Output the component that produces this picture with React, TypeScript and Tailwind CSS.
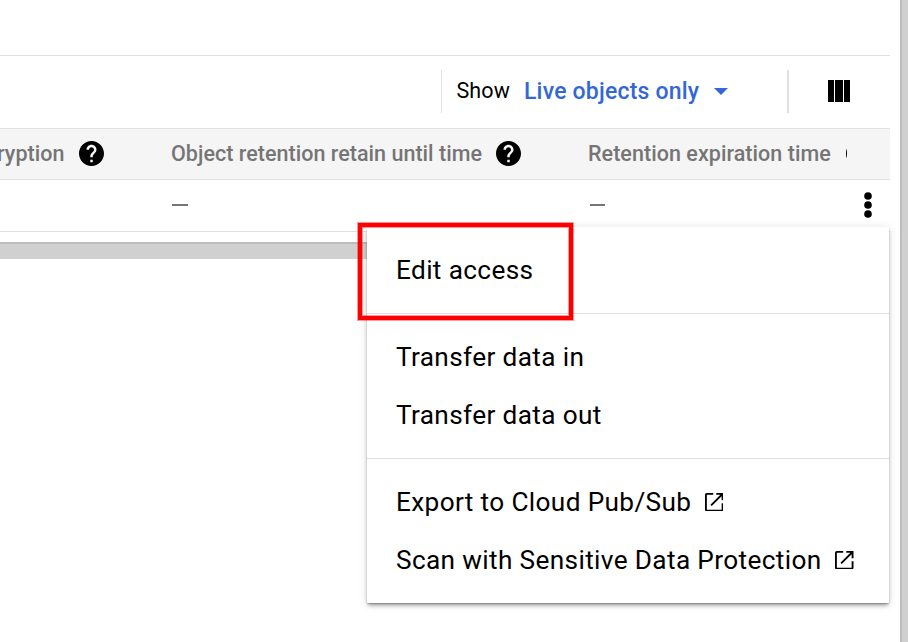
import React from "react";

function HelpIcon() {
  return (
    <svg viewBox="2 2 20 20" className="h-[25px] w-[25px] shrink-0 fill-black">
      <path d="M12 2C6.48 2 2 6.48 2 12s4.48 10 10 10 10-4.48 10-10S17.52 2 12 2zm1 17h-2v-2h2v2zm2.07-7.75l-.9.92C13.45 12.9 13 13.5 13 15h-2v-.5c0-1.1.45-2.1 1.17-2.83l1.24-1.26c.37-.36.59-.86.59-1.41 0-1.1-.9-2-2-2s-2 .9-2 2H8c0-2.21 1.79-4 4-4s4 1.79 4 4c0 .88-.36 1.68-.93 2.25z" />
    </svg>
  );
}

function OpenInNewIcon() {
  return (
    <svg viewBox="3 3 18 18" className="h-[18.5px] w-[18.5px] shrink-0 fill-black">
      <path d="M21 19.3c0 .95-.75 1.7-1.7 1.7H4.7C3.75 21 3 20.25 3 19.3V4.7C3 3.75 3.75 3 4.7 3H11v1.8H4.8v14.4h14.4V13H21zM14 3v1.8h3.93l-9.63 9.63 1.27 1.27L19.2 6.07V10H21V3z" />
    </svg>
  );
}

function MenuItem({ label, external }: { label: string; external?: boolean }) {
  return (
    <div className="flex h-[58px] items-center gap-[13.5px] whitespace-nowrap pl-[29px] text-[26.2px] tracking-[0.36px] text-black">
      <span className="pt-[2px]">{label}</span>
      {external && <OpenInNewIcon />}
    </div>
  );
}

export default function App() {
  return (
    <div className="relative flex h-[642px] w-[908px] overflow-hidden bg-white font-[Roboto,sans-serif]">
      <main className="w-[900px] shrink-0">
        <div className="w-[890px]">
          <div className="h-[55px]" />
          <div className="flex h-[73px] items-center border-t border-[#e0e0e0] pb-[2px]">
            <div className="ml-[441px] h-[43px] w-px bg-[#e0e0e0]" />
            <span className="ml-[14.5px] w-[67.5px] text-[21.5px] tracking-[0.1px] text-black">Show</span>
            <span className="w-[190px] whitespace-nowrap pt-[2px] text-[23px] font-medium tracking-[0.2px] text-[#3367d6]">
              Live objects only
            </span>
            <svg viewBox="0 0 14 7" className="h-[7px] w-[14px] fill-[#3367d6]">
              <path d="M0 0h14L7 7z" />
            </svg>
            <div className="ml-[59px] h-[43px] w-[2px] bg-[#e0e0e0]" />
            <svg viewBox="0 0 22 22" className="ml-[39px] h-[22px] w-[22px] fill-black">
              <path d="M0 0h6v22H0zM7 0h8v22H7zM16 0h6v22h-6z" />
            </svg>
          </div>
          <div className="flex h-[52px] items-center overflow-hidden whitespace-nowrap border-y border-[#e0e0e0] bg-[#f5f5f5] pb-px text-[21.5px] font-medium tracking-[0.05px] text-[#757575]">
            <div className="flex w-[171px] items-center gap-[14px]">
              <div className="flex w-[65px] justify-start">
                <span className="-ml-[3px] pt-[2px]">ryption</span>
              </div>
              <HelpIcon />
            </div>
            <div className="flex w-[417px] items-center gap-[14px]">
              <span className="pt-[2px] tracking-[0.03px]">Object retention retain until time</span>
              <HelpIcon />
            </div>
            <div className="flex w-[259px] items-center gap-[15px] overflow-hidden">
              <span className="pt-[2px]">Retention expiration time</span>
              <HelpIcon />
            </div>
          </div>
          <div className="flex h-[52px] items-center border-b border-[#e0e0e0] pb-[2px]">
            <div className="ml-[172px] h-[2px] w-[16px] bg-[#757575]" />
            <div className="ml-[402px] h-[2px] w-[15px] bg-[#757575]" />
            <svg viewBox="0 0 8 26" className="ml-[259px] h-[26px] w-[8px] fill-black">
              <circle cx="4" cy="4" r="3.8" />
              <circle cx="4" cy="13" r="3.8" />
              <circle cx="4" cy="22" r="3.8" />
            </svg>
          </div>
        </div>
        <div className="mt-[10px] h-[17px] w-[500px] border-t-2 border-[#bdbdbd] bg-[#d0d0d0]" />
      </main>
      <div className="w-[8px] shrink-0 border-l-2 border-[#bdbdbd] bg-[#d0d0d0]" />

      <div className="absolute left-[367px] top-[227px] w-[522px] divide-y divide-[#e0e0e0] bg-white shadow-[0_1px_1px_rgba(0,0,0,0.14),0_3px_4px_-1px_rgba(0,0,0,0.38),0_1px_9px_rgba(0,0,0,0.12)]">
        <div className="py-[14px]">
          <MenuItem label="Edit access" />
        </div>
        <div className="py-[14px]">
          <MenuItem label="Transfer data in" />
          <MenuItem label="Transfer data out" />
        </div>
        <div className="py-[14px]">
          <MenuItem label="Export to Cloud Pub/Sub" external />
          <MenuItem label="Scan with Sensitive Data Protection" external />
        </div>
      </div>
      <div className="absolute left-[358px] top-[223px] h-[97px] w-[215px] border-4 border-[#ff0000] shadow-[0_0_0_1px_rgba(255,0,0,0.4),inset_0_0_0_1px_rgba(255,0,0,0.4)]" />
    </div>
  );
}
